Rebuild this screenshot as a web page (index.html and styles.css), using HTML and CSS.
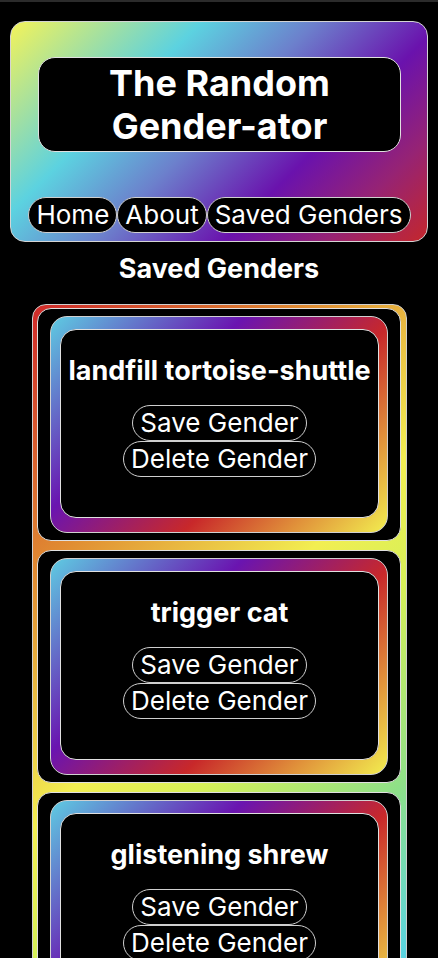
FILE: index.html
```html
<!DOCTYPE html>
<html lang="en">
<head>
<meta charset="utf-8">
<title>The Random Gender-ator</title>
<link rel="stylesheet" href="styles.css">
</head>
<body>
<div class="topbar"></div>
<header class="hero">
  <div class="title-box">
    <h1 class="title">The Random<br>Gender-ator</h1>
  </div>
  <nav class="nav">
    <a class="pill" href="#">Home</a>
    <a class="pill" href="#">About</a>
    <a class="pill" href="#">Saved Genders</a>
  </nav>
</header>
<h2 class="section-title">Saved Genders</h2>
<section class="saved-list">
  <article class="card">
    <div class="card-ring">
      <div class="card-body">
        <h3 class="gender-name">landfill tortoise-shuttle</h3>
        <div class="actions">
          <button class="pill">Save Gender</button>
          <button class="pill">Delete Gender</button>
        </div>
      </div>
    </div>
  </article>
  <article class="card">
    <div class="card-ring">
      <div class="card-body">
        <h3 class="gender-name">trigger cat</h3>
        <div class="actions">
          <button class="pill">Save Gender</button>
          <button class="pill">Delete Gender</button>
        </div>
      </div>
    </div>
  </article>
  <article class="card">
    <div class="card-ring">
      <div class="card-body">
        <h3 class="gender-name">glistening shrew</h3>
        <div class="actions">
          <button class="pill">Save Gender</button>
          <button class="pill">Delete Gender</button>
        </div>
      </div>
    </div>
  </article>
</section>
</body>
</html>
```

FILE: styles.css
```css
* { box-sizing: border-box; }
html, body { background: #000; }
body {
  margin: 0;
  color: #fff;
  font-family: Inter, "Noto Sans", "Liberation Sans", sans-serif;
}
.topbar {
  height: 2px;
  background: #2b2b2b;
}
.hero {
  margin: 19px 10px 0;
  border: 1px solid #d4d4d4;
  border-radius: 15px;
  padding: 35px 26px 8px 27px;
  background: linear-gradient(135deg, #f3f35a 0%, #a4e0a0 16%, #5cd2e0 30%, #6c80cc 48%, #6a12ad 68%, #962374 84%, #c4272c 100%);
}
.title-box {
  background: #000;
  border: 1px solid #e0e0e0;
  border-radius: 17px;
  padding: 4px 0 3px;
}
.title {
  margin: 0;
  text-align: center;
  font-size: 36px;
  line-height: 43px;
  font-weight: 700;
}
.nav {
  margin-top: 45px;
  display: flex;
  justify-content: center;
  align-items: flex-start;
}
.pill {
  display: inline-block;
  flex: none;
  white-space: nowrap;
  background: #000;
  color: #fff;
  border: 1px solid #cfcfcf;
  border-radius: 18px;
  padding: 1px 7px;
  font-family: inherit;
  font-size: 26px;
  line-height: 32px;
  font-weight: 400;
  text-decoration: none;
}
.nav .pill {
  padding: 1px 7px;
}
.section-title {
  margin: 10px 0 19px;
  text-align: center;
  font-size: 27px;
  line-height: 33px;
  font-weight: 700;
}
.saved-list {
  margin: 0 31px 0 32px;
  border: 1px solid #cfcfcf;
  border-radius: 14px;
  padding: 3px 5px 3px 4px;
  display: flex;
  flex-direction: column;
  gap: 9px;
  background: linear-gradient(135deg, #cf2a2a 0px, #e08a32 190px, #f2ee52 370px, #d6f058 460px, #8ee088 600px, #5ad4e0 720px, #6a6ad0 880px, #6a14b0 1000px);
}
.card {
  background: #000;
  border: 1px solid #e0e0e0;
  border-radius: 14px;
  padding: 7px 12px;
}
.card-ring {
  border: 1px solid #d0d0d0;
  border-radius: 17px;
  padding: 12px 8px 14px 9px;
  background: linear-gradient(135deg, #5ecce2 0%, #6a14b0 35%, #c8282a 63%, #e0903a 82%, #f2ee50 100%);
}
.card-body {
  background: #000;
  border: 1px solid #e0e0e0;
  border-radius: 16px;
  padding: 24px 0 40px;
  text-align: center;
}
.gender-name {
  margin: 0 0 18px;
  font-size: 27px;
  line-height: 33px;
  font-weight: 700;
}
.actions {
  display: flex;
  flex-direction: column;
  align-items: center;
}
```
